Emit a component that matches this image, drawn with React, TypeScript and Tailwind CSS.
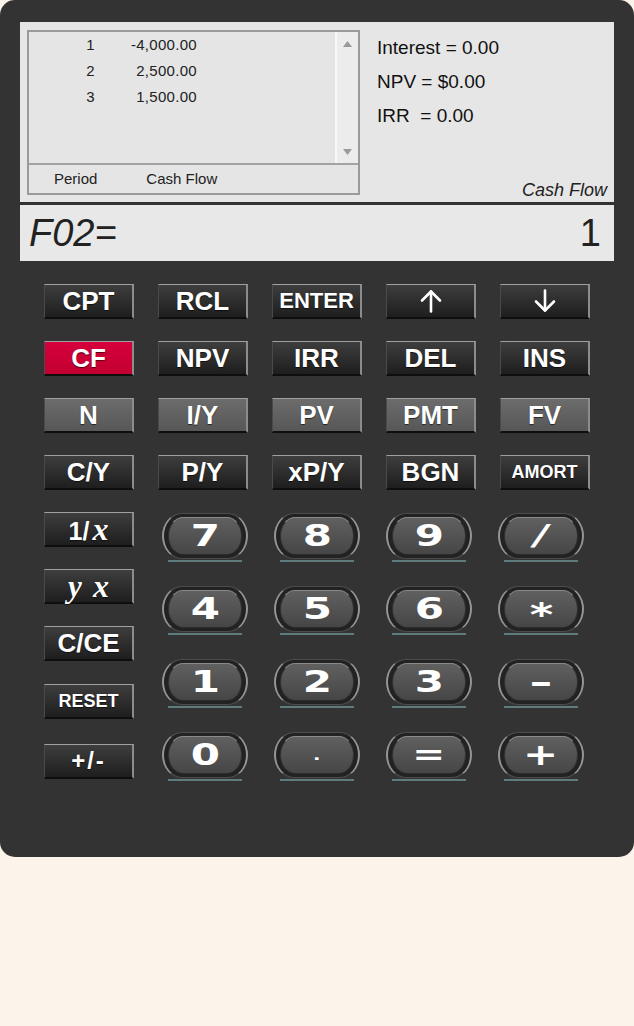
import React from "react";

type Variant = "dark" | "gray" | "red";

const variantCls: Record<Variant, string> = {
  dark: "bg-gradient-to-b from-[#3e3e3e] to-[#1e1e1e]",
  gray: "bg-gradient-to-b from-[#6c6c6c] to-[#575757]",
  red: "bg-gradient-to-b from-[#d6003c] to-[#c20030]",
};

function RectKey({
  children,
  variant = "dark",
  size = "text-[26px]",
  className = "",
}: {
  children: React.ReactNode;
  variant?: Variant;
  size?: string;
  className?: string;
}) {
  return (
    <div
      className={`flex h-[35px] w-[90px] items-center justify-center border-t border-t-[#a0a0a0] border-r-2 border-r-[#8c8c8c] border-b-2 border-b-[#0e0e0e] border-l border-l-[#4a4a4a] font-['Liberation_Sans',Arial,sans-serif] font-bold leading-none text-white [text-shadow:0_1px_1px_rgba(0,0,0,0.6)] ${variantCls[variant]} ${size} ${className}`}
    >
      {children}
    </div>
  );
}

function NumKey({ label, size = "text-[30px]" }: { label: string; size?: string }) {
  return (
    <div className="flex h-[49px] w-[86px] flex-col">
      <div className="h-[46px] rounded-[20px/23px] border-x-2 border-x-[#959595] border-y border-y-[#4c4c4c] bg-[#222222] px-[4px] py-[3px]">
        <div className="flex h-full items-center justify-center rounded-[15px/19px] border-x border-x-[#333] border-t border-t-[#8a8a8a] border-b border-b-[#2c2c2c] bg-gradient-to-b from-[#606060] to-[#464646]">
          <span
            className={`inline-block scale-x-[1.4] font-['DejaVu_Sans',sans-serif] font-bold leading-none text-white ${size}`}
          >
            {label}
          </span>
        </div>
      </div>
      <div className="mx-auto mt-[1px] h-[2px] w-[74px] bg-[#5f7c7c]" />
    </div>
  );
}

function Arrow({ down = false }: { down?: boolean }) {
  return (
    <svg
      width="22"
      height="24"
      viewBox="0 0 22 24"
      fill="none"
      stroke="white"
      strokeWidth="2.6"
      strokeLinecap="round"
      strokeLinejoin="round"
      className={down ? "rotate-180" : ""}
    >
      <path d="M11 22.5V2.5" />
      <path d="M2 11.5L11 2.5L20 11.5" />
    </svg>
  );
}

const rows: { label: React.ReactNode; variant?: Variant; size?: string }[][] = [
  [
    { label: "CPT" },
    { label: "RCL" },
    { label: "ENTER", size: "text-[22px]" },
    { label: <Arrow /> },
    { label: <Arrow down /> },
  ],
  [
    { label: "CF", variant: "red" },
    { label: "NPV" },
    { label: "IRR" },
    { label: "DEL" },
    { label: "INS" },
  ],
  [
    { label: "N", variant: "gray" },
    { label: "I/Y", variant: "gray" },
    { label: "PV", variant: "gray" },
    { label: "PMT", variant: "gray" },
    { label: "FV", variant: "gray" },
  ],
  [
    { label: "C/Y" },
    { label: "P/Y" },
    { label: "xP/Y" },
    { label: "BGN" },
    { label: "AMORT", size: "text-[18px]" },
  ],
];

const nums: { l: string; s?: string }[] = [
  { l: "7" },
  { l: "8" },
  { l: "9" },
  { l: "/", s: "text-[28px] italic" },
  { l: "4" },
  { l: "5" },
  { l: "6" },
  { l: "*", s: "text-[32px] translate-y-[5px]" },
  { l: "1" },
  { l: "2" },
  { l: "3" },
  { l: "–", s: "text-[32px]" },
  { l: "0" },
  { l: ".", s: "text-[14px]" },
  { l: "=", s: "text-[28px]" },
  { l: "+", s: "text-[30px]" },
];

export default function App() {
  return (
    <div className="h-[1026px] w-[634px] bg-[#fcf4ea]">
      <div className="h-[857px] w-[634px] rounded-[15px] bg-[#333333] px-[20px] pt-[22px]">
        {/* Upper screen */}
        <div className="flex h-[180px] bg-[#e6e6e6] font-['Liberation_Sans',Arial,sans-serif]">
          <div className="ml-[7px] mt-[8px] flex h-[165px] w-[333px] flex-col border-2 border-[#9a9a9a] bg-[#e5e5e5]">
            <div className="flex h-[131px]">
              <div className="flex-1 text-[15px] tracking-[0.3px] text-[#222]">
                {[
                  ["1", "-4,000.00"],
                  ["2", "2,500.00"],
                  ["3", "1,500.00"],
                ].map(([p, v]) => (
                  <div key={p} className="flex leading-[26px]">
                    <span className="w-[66px] text-right">{p}</span>
                    <span className="w-[102px] text-right">{v}</span>
                  </div>
                ))}
              </div>
              <div className="flex w-[23px] flex-col items-center justify-between border-l-2 border-l-[#f8f8f8] bg-[#ececec] pb-[8px] pt-[9px]">
                <svg width="9" height="6" viewBox="0 0 9 6">
                  <path d="M0 6L4.5 0L9 6Z" fill="#9a9a9a" />
                </svg>
                <svg width="9" height="6" viewBox="0 0 9 6">
                  <path d="M0 0L4.5 6L9 0Z" fill="#9a9a9a" />
                </svg>
              </div>
            </div>
            <div className="flex flex-1 items-center border-t-2 border-t-[#a3a3a3] pl-[25px] text-[15px] text-[#222]">
              <span>Period</span>
              <span className="ml-[49px]">Cash Flow</span>
            </div>
          </div>
          <div className="ml-[17px] flex flex-1 flex-col pt-[9px] text-[19px] leading-[34px] text-[#111]">
            <div>Interest = 0.00</div>
            <div>NPV = $0.00</div>
            <div className="whitespace-pre">IRR  = 0.00</div>
            <div className="mt-auto pb-[2px] pr-[7px] text-right text-[18px] italic leading-[20px] text-[#222]">
              Cash Flow
            </div>
          </div>
        </div>

        {/* Lower display */}
        <div className="mt-[3px] flex h-[56px] items-center justify-between bg-[#e8e8e8] pl-[9px] pr-[13px] font-['Liberation_Sans',Arial,sans-serif] text-[38px] leading-none text-[#222]">
          <span className="italic">F02=</span>
          <span>1</span>
        </div>

        {/* Keypad */}
        <div className="pl-[24px] pt-[23px]">
          <div className="grid grid-cols-[repeat(5,90px)] gap-x-[24px] gap-y-[22px]">
            {rows.flat().map((k, i) => (
              <RectKey key={i} variant={k.variant} size={k.size}>
                {k.label}
              </RectKey>
            ))}
          </div>
          <div className="mt-[22px] flex">
            <div className="flex w-[90px] flex-col">
              <RectKey>
                <span className="flex items-baseline">
                  <span className="text-[25px]">1/</span>
                  <span className="ml-[3px] font-['Liberation_Serif',serif] text-[32px] italic">x</span>
                </span>
              </RectKey>
              <RectKey className="mt-[22px]">
                <span className="flex items-baseline">
                  <span className="font-['Liberation_Serif',serif] text-[31px] italic">y</span>
                  <span className="ml-[11px] font-['Liberation_Serif',serif] text-[32px] italic">x</span>
                </span>
              </RectKey>
              <RectKey className="mt-[22px]">C/CE</RectKey>
              <RectKey className="mt-[23px]" size="text-[18px]">
                RESET
              </RectKey>
              <RectKey className="mt-[25px]" size="text-[24px] tracking-[2px]">
                +/-
              </RectKey>
            </div>
            <div className="ml-[28px] mt-[1px] grid grid-cols-[repeat(4,86px)] content-start gap-x-[26px] gap-y-[24px]">
              {nums.map((n) => (
                <NumKey key={n.l} label={n.l} size={n.s} />
              ))}
            </div>
          </div>
        </div>
      </div>
    </div>
  );
}
